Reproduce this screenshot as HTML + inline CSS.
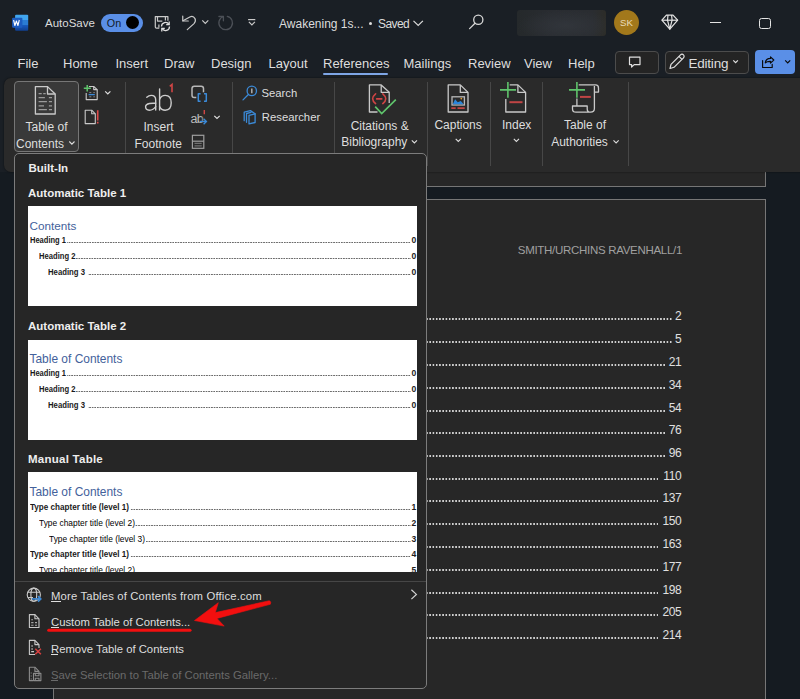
<!DOCTYPE html>
<html><head><meta charset="utf-8"><style>
html,body{margin:0;padding:0;}
body{width:800px;height:699px;overflow:hidden;position:relative;background:#151b21;font-family:"Liberation Sans", sans-serif;}
.t{position:absolute;white-space:pre;line-height:1;}
.b{position:absolute;}
svg.b{overflow:visible;}
</style></head><body>
<div class="b" style="left:53px;top:-10px;width:713px;height:197px;background:#272727;border:1px solid #767676;box-sizing:border-box;"></div>
<div class="b" style="left:53px;top:199px;width:713px;height:520px;background:#272727;border:1px solid #767676;box-sizing:border-box;"></div>
<div class="b" style="left:0px;top:0px;width:800px;height:78px;background:#1a1f25;"></div>
<div class="b" style="left:0px;top:78px;width:53px;height:94px;background:#1a1f25;"></div>
<div class="b" style="left:3.5px;top:78px;width:800px;height:94px;background:#2a2a2a;border-radius:7px 0 0 7px;box-shadow:0 0 2px rgba(0,0,0,0.6);"></div>
<div class="t" style="left:45.00px;top:18px;font-size:11.5px;color:#dcdcdc;">AutoSave</div>
<div class="b" style="left:101.3px;top:14px;width:41.5px;height:17.8px;background:#5a8fe7;border-radius:9px;"></div>
<div class="t" style="left:106.80px;top:18px;font-size:10.8px;color:#111a2a;">On</div>
<div class="b" style="left:126.1px;top:16.1px;width:13.4px;height:13.4px;background:#000;border-radius:50%;"></div>
<div class="t" style="left:279.00px;top:18px;font-size:12px;color:#dcdcdc;">Awakening 1s...</div>
<div class="b" style="left:369.3px;top:21.5px;width:3px;height:3px;background:#dcdcdc;border-radius:50%;"></div>
<div class="t" style="left:378.00px;top:18px;font-size:12px;color:#dcdcdc;letter-spacing:-0.6px;">Saved</div>
<div class="b" style="left:516.5px;top:9.5px;width:89.2px;height:26px;background:radial-gradient(ellipse at 55% 60%, rgba(50,54,60,0.9) 0%, rgba(40,44,48,0) 70%), linear-gradient(to right, #25292b 0%, #292c31 40%, #2a2d31 85%, #2c2c28 100%);border-radius:3px;"></div>
<div class="b" style="left:613.8px;top:10px;width:25px;height:25px;background:#a2781b;border-radius:50%;"></div>
<div class="t" style="left:426.50px;width:400px;text-align:center;top:18px;font-size:9.6px;color:#eadcbc;">SK</div>
<div class="b" style="left:710px;top:21.6px;width:10.5px;height:1.2px;background:#e4e4e4;"></div>
<div class="b" style="left:759px;top:17.5px;width:11.5px;height:11.5px;border:1.25px solid #e4e4e4;border-radius:2.5px;box-sizing:border-box;"></div>
<div class="t" style="left:17.50px;top:57px;font-size:13px;color:#dedede;">File</div>
<div class="t" style="left:63.00px;top:57px;font-size:13px;color:#dedede;">Home</div>
<div class="t" style="left:115.50px;top:57px;font-size:13px;color:#dedede;">Insert</div>
<div class="t" style="left:164.00px;top:57px;font-size:13px;color:#dedede;">Draw</div>
<div class="t" style="left:211.00px;top:57px;font-size:13px;color:#dedede;">Design</div>
<div class="t" style="left:268.50px;top:57px;font-size:13px;color:#dedede;">Layout</div>
<div class="t" style="left:323.00px;top:57px;font-size:13px;color:#dedede;">References</div>
<div class="t" style="left:403.50px;top:57px;font-size:13px;color:#dedede;">Mailings</div>
<div class="t" style="left:468.00px;top:57px;font-size:13px;color:#dedede;">Review</div>
<div class="t" style="left:524.00px;top:57px;font-size:13px;color:#dedede;">View</div>
<div class="t" style="left:568.00px;top:57px;font-size:13px;color:#dedede;">Help</div>
<div class="b" style="left:323px;top:72.5px;width:65px;height:2px;background:#7ea6e6;border-radius:1px;"></div>
<div class="b" style="left:615px;top:51px;width:44px;height:23px;border:1px solid #4c4c4c;border-radius:4px;box-sizing:border-box;background:#242424;"></div>
<div class="b" style="left:665px;top:51px;width:84px;height:23px;border:1px solid #4c4c4c;border-radius:4px;box-sizing:border-box;background:#242424;"></div>
<div class="t" style="left:688.40px;top:57px;font-size:13.5px;color:#dedede;letter-spacing:-0.2px;">Editing</div>
<div class="b" style="left:755.3px;top:50.3px;width:40px;height:23.4px;background:#5a8fe7;border-radius:4px;"></div>
<div class="b" style="left:14px;top:81px;width:65px;height:71px;background:#393939;border:1px solid #767676;border-radius:4px;box-sizing:border-box;"></div>
<div class="t" style="left:-153.50px;width:400px;text-align:center;top:121px;font-size:12px;color:#dedede;">Table of</div>
<div class="t" style="left:-160.00px;width:400px;text-align:center;top:138px;font-size:12px;color:#dedede;">Contents</div>
<div class="b" style="left:124.5px;top:82px;width:1px;height:71px;background:#474747;"></div>
<div class="t" style="left:-41.50px;width:400px;text-align:center;top:121px;font-size:12px;color:#dedede;">Insert</div>
<div class="t" style="left:-41.80px;width:400px;text-align:center;top:138px;font-size:12px;color:#dedede;">Footnote</div>
<div class="t" style="left:190.60px;top:113px;font-size:12.5px;color:#bdbdbd;letter-spacing:-0.9px;">ab</div>
<div class="b" style="left:199.5px;top:112px;width:8px;height:12px;background:linear-gradient(to right, rgba(42,42,42,0) 0, rgba(42,42,42,0.75) 70%);"></div>
<div class="b" style="left:231.5px;top:82px;width:1px;height:71px;background:#474747;"></div>
<div class="t" style="left:261.50px;top:88px;font-size:11.3px;color:#dedede;">Search</div>
<div class="t" style="left:261.80px;top:112px;font-size:11.3px;color:#dedede;">Researcher</div>
<div class="b" style="left:333.5px;top:82px;width:1px;height:71px;background:#474747;"></div>
<div class="t" style="left:179.70px;width:400px;text-align:center;top:120px;font-size:12px;color:#dedede;">Citations &amp;</div>
<div class="t" style="left:174.30px;width:400px;text-align:center;top:136px;font-size:12px;color:#dedede;">Bibliography</div>
<div class="b" style="left:427px;top:82px;width:1px;height:84px;background:#474747;"></div>
<div class="t" style="left:258.10px;width:400px;text-align:center;top:119px;font-size:12px;color:#dedede;">Captions</div>
<div class="b" style="left:490px;top:82px;width:1px;height:84px;background:#474747;"></div>
<div class="t" style="left:316.70px;width:400px;text-align:center;top:119px;font-size:12px;color:#dedede;">Index</div>
<div class="b" style="left:542px;top:82px;width:1px;height:84px;background:#474747;"></div>
<div class="t" style="left:385.00px;width:400px;text-align:center;top:119px;font-size:12px;color:#dedede;">Table of</div>
<div class="t" style="left:379.50px;width:400px;text-align:center;top:136px;font-size:12px;color:#dedede;">Authorities</div>
<div class="b" style="left:628px;top:82px;width:1px;height:84px;background:#474747;"></div>
<svg class="b" style="left:0;top:0" width="800" height="699" viewBox="0 0 800 699"><defs><linearGradient id="wg" x1="0" y1="0" x2="0" y2="1"><stop offset="0" stop-color="#41a5ee"/><stop offset="0.33" stop-color="#41a5ee"/><stop offset="0.33" stop-color="#2b7cd3"/><stop offset="0.66" stop-color="#2b7cd3"/><stop offset="0.66" stop-color="#185abd"/><stop offset="1" stop-color="#103f91"/></linearGradient></defs><rect x="15.1" y="14.7" width="13.1" height="16" rx="1" fill="url(#wg)"/><rect x="12.1" y="17.7" width="10.3" height="10" rx="1" fill="#1d5cc0"/><path d="M13.6 20l1.3 5.5 1.5-4.5 1.5 4.5 1.4-5.5" fill="none" stroke="#fff" stroke-width="1.1" stroke-linejoin="round"/><g fill="none" stroke="#c9c9c9" stroke-width="1.2" stroke-linejoin="round"><path d="M159.3 28.2H156.5Q155.3 28.2 155.3 27V16.6H167.9V20.8"/><path d="M157.5 16.6V21.1H162.3"/><path d="M165.4 16.6V20.6"/><path d="M158.9 24.6V27.6"/></g><g fill="none" stroke="#e0e0e0" stroke-width="1.25"><path d="M161.5 26.6A4 4 0 0 1 169 24.6"/><path d="M169.2 21.6V24.7H166.2"/><path d="M169.5 26.4A4 4 0 0 1 162 28.4"/><path d="M161.8 31.4V28.3H164.8"/></g><g fill="none" stroke="#c9c9c9" stroke-width="1.2" stroke-linecap="round" stroke-linejoin="round"><path d="M182.75 16.2V21H188.3"/><path d="M183 20.8L189.8 17Q193.2 15.3 195 18.6Q196.2 21.2 194 23.6L187.3 29.6"/></g><path d="M202.3 20.3l3 3 3-3" fill="none" stroke="#c9c9c9" stroke-width="1.2"/><g fill="none" stroke="#4c5057" stroke-width="1.3" stroke-linecap="round" stroke-linejoin="round"><path d="M227.3 16.3A6.8 6.8 0 1 1 223.4 16.5"/><path d="M218.9 16.5H223.4V20.8"/></g><g fill="none" stroke="#c9c9c9" stroke-width="1.2"><path d="M248.1 19.6H255.3"/><path d="M248.9 21.9l3 3 3-3"/></g><path d="M413.5 20.8l4.7 4.7 4.7-4.7" fill="none" stroke="#dcdcdc" stroke-width="1.2"/><g fill="none" stroke="#d8d8d8" stroke-width="1.3" stroke-linecap="round"><circle cx="478.3" cy="19.8" r="4.6"/><path d="M475 23.2L469.6 28.6"/></g><g fill="none" stroke="#e4e4e4" stroke-width="1.2" stroke-linejoin="round"><path d="M666.4 15.1H673L677.7 20.2L669.8 29.2L661.9 20.2Z"/><path d="M661.9 20.2H677.7"/><path d="M668 15.1L667.5 20.2L669.8 29.2L672.1 20.2L671.6 15.1"/></g><path d="M629.5 57.2H640V64.6H634.2L631.6 67V64.6H629.5Z" fill="none" stroke="#e0e0e0" stroke-width="1.2" stroke-linejoin="round"/><g fill="none" stroke="#e0e0e0" stroke-width="1.2" stroke-linejoin="round"><path d="M670 68.5L671 64.3L680.5 54.8A2.1 2.1 0 0 1 683.5 57.8L674 67.3Z"/><path d="M679 56.3L682 59.3"/></g><path d="M733.3 60.3l2.3 2.3 2.3-2.3" fill="none" stroke="#e0e0e0" stroke-width="1.2"/><g fill="none" stroke="#0a0a0a" stroke-width="1.15" stroke-linejoin="round" stroke-linecap="round"><path d="M762.6 60.6V67.5H772.2V64.3"/><path d="M765.3 62.9C765.6 60 767.5 58.4 770.5 58.4V56.8L773.8 60L770.5 63.1V61.4C768 61.3 766.5 61.8 765.3 62.9Z"/></g><path d="M785.2 60.3l2.5 2.5 2.5-2.5" fill="none" stroke="#0a0a0a" stroke-width="1.2"/><g fill="none" stroke="#c9c9c9" stroke-width="1.3" stroke-linejoin="round"><path d="M35.4 86.6H47.5L55.2 94V114H35.4Z"/><path d="M47.5 86.6V94H55.2"/></g><g stroke="#9a9a9a" stroke-width="1.3"><path d="M38.6 93.7H41.7M43.2 93.7H45.7"/><path d="M38.6 97.7H44.9M48.9 97.7H52"/><path d="M38.6 101.6H46.9M48.9 101.6H52"/><path d="M38.6 105.8H44M48.9 105.8H52"/><path d="M38.6 109.6H46.9M48.9 109.6H52"/></g><path d="M69.3 141.5l2.6 2.6 2.6-2.6" fill="none" stroke="#dedede" stroke-width="1.1"/><g fill="none" stroke="#c9c9c9" stroke-width="1.1" stroke-linejoin="round"><path d="M88.9 86.5H93.7L97.2 89.6V99.6H86.2V93"/><path d="M93.7 86.5V89.6H97.2"/></g><path d="M89.3 92.6H91.3M93.4 92.6H94.8M89.3 96.8H91.3M93.4 96.8H94.8" stroke="#8a8a8a" stroke-width="1"/><path d="M88.6 94.6H94.8" stroke="#3b8ad8" stroke-width="1.3"/><path d="M87.2 84.9V91.6M83.8 88.2H90.9" stroke="#5fc46c" stroke-width="1.5"/><path d="M105.2 91.4l2.6 2.6 2.6-2.6" fill="none" stroke="#dedede" stroke-width="1.2"/><g fill="none" stroke="#c9c9c9" stroke-width="1.1" stroke-linejoin="round"><path d="M85.2 110.2H91.7L95.3 113.8V123.6H85.2Z"/><path d="M91.7 110.2V113.8H95.3"/></g><path d="M97.7 110.2V120.5M97.7 121.8V123.6" stroke="#e04a4a" stroke-width="1.6"/><g fill="none" stroke="#cdcdcd" stroke-width="1.4" stroke-linecap="round"><path d="M146.8 97.3Q148.8 95.4 151.2 95.4Q155.7 95.4 155.7 100V110"/><path d="M155.7 103.3Q152 103 149.5 103.5Q145.6 104.2 145.6 106.8Q145.6 110.2 149.3 110.2Q153.4 110.2 155.7 106.5"/><path d="M159.6 89V110"/><path d="M159.6 99.2Q161.4 95.4 165.2 95.4Q171.2 95.4 171.2 102.8Q171.2 110.2 165.2 110.2Q161.4 110.2 159.6 106.6"/></g><path d="M169.8 86.3L172 84.4V92.3" fill="none" stroke="#d04545" stroke-width="1.6"/><rect x="192" y="86.3" width="11.5" height="11.2" rx="2.3" fill="none" stroke="#b8b8b8" stroke-width="1.5"/><rect x="196.3" y="92.3" width="11.5" height="10.5" fill="#2a2a2a"/><g fill="none" stroke="#3b8ad8" stroke-width="1.5" stroke-linejoin="round"><path d="M200.6 93.8H198.3V101.2H200.6"/><path d="M204 93.8H206.3V101.2H204"/></g><path d="M204.3 110V114.2" stroke="#d04545" stroke-width="1.4"/><g fill="none" stroke="#3b8ad8" stroke-width="1.4"><path d="M199.8 121.5H206.3"/><path d="M203.6 118.8L206.4 121.5L203.6 124.2"/></g><path d="M214.3 115.8l2.7 2.7 2.7-2.7" fill="none" stroke="#dedede" stroke-width="1.2"/><g fill="none" stroke="#9e9e9e" stroke-width="1.2"><rect x="192.4" y="135.3" width="11.4" height="13"/><path d="M192.4 141.2H203.8"/><path d="M194.5 143.4H201.7M194.5 145.8H201.7" stroke="#707070"/></g><g fill="none" stroke="#3b8ad8" stroke-width="1.3" stroke-linecap="round"><circle cx="251.8" cy="90.9" r="4.7"/><path d="M248.4 94.5L243 99.9"/></g><path d="M251.8 88.6V93.3" stroke="#a8a8a8" stroke-width="1.6"/><g fill="none" stroke="#3b8ad8" stroke-width="1.3" stroke-linejoin="round" stroke-linecap="round"><path d="M249 123.8V115.3L255.1 113.8V122.5Z"/><path d="M246.5 122.3V113.5L251 112.3"/><path d="M244.2 120.7V112.2L250.4 110.6L255.1 113.8"/></g><g fill="none" stroke="#c9c9c9" stroke-width="1.3" stroke-linejoin="round"><path d="M377.5 112H369.4V84.9H381.2L389.2 92.3V102.9"/><path d="M381.2 84.9V92.3H389.2"/></g><g fill="none" stroke="#d04545" stroke-width="1.6" stroke-linecap="round"><path d="M375.6 93.8Q369.7 98.7 375.6 103.6"/><path d="M382.8 93.8Q388.7 98.7 382.8 103.6"/><path d="M376.6 98.9H381.8"/></g><path d="M375.2 106.6L381.7 113.5L395.8 99.7" fill="none" stroke="#5fc46c" stroke-width="1.7"/><path d="M411.8 140.3l2.6 2.6 2.6-2.6" fill="none" stroke="#dedede" stroke-width="1.1"/><g fill="none" stroke="#c9c9c9" stroke-width="1.3" stroke-linejoin="round"><path d="M448.2 84.9H460.3L468 92.4V112H448.2Z"/><path d="M460.3 84.9V92.4H468"/></g><rect x="452" y="96.8" width="12.4" height="8.2" fill="none" stroke="#b8b8b8" stroke-width="1.3"/><path d="M452.8 104.3L455.1 99.3L457.7 102.3L460.8 100.9L463.6 104.3Z" fill="#2b86dc"/><circle cx="461.3" cy="98.6" r="0.9" fill="#e09a30"/><path d="M451.3 108.1H455.7M457.5 108.1H464.7" stroke="#c04545" stroke-width="1.8"/><path d="M455.7 138.8l2.6 2.6 2.6-2.6" fill="none" stroke="#dedede" stroke-width="1.1"/><g fill="none" stroke="#c9c9c9" stroke-width="1.3" stroke-linejoin="round"><path d="M509.7 84.9H517.9L525.6 92.4V112H505.8V99.1"/><path d="M517.9 84.9V92.4H525.6"/></g><path d="M507.9 82V97.8M500 89.9H516" stroke="#5fc46c" stroke-width="1.6"/><path d="M509.4 102.2H522.5" stroke="#c04545" stroke-width="2"/><path d="M513.8 138.8l2.6 2.6 2.6-2.6" fill="none" stroke="#dedede" stroke-width="1.1"/><g fill="none" stroke="#c9c9c9" stroke-width="1.3" stroke-linejoin="round"><path d="M578.7 84.9H595.5Q598.5 84.9 598.5 88V92.1H594.4"/><path d="M594.4 86V108.5Q594.4 112.2 590.5 112.2H576Q572.5 112.2 572.5 109V106H587.2V109Q587.2 112.2 590.5 112.2"/><path d="M576.9 98.5V106"/></g><path d="M576.9 82V97.8M569 89.9H585" stroke="#5fc46c" stroke-width="1.6"/><path d="M580 96.9H590.8" stroke="#c04545" stroke-width="2"/><path d="M613.5 140.3l2.6 2.6 2.6-2.6" fill="none" stroke="#dedede" stroke-width="1.1"/></svg>
<div class="t" style="right:118.00px;top:245px;font-size:11.5px;color:#a0a0a0;letter-spacing:-0.3px;">SMITH/URCHINS RAVENHALL/1</div>
<div class="t" style="right:118.60px;top:310px;font-size:12px;color:#e0e0e0;letter-spacing:-0.35px;">2</div>
<div class="b" style="left:427px;top:318px;width:244.5px;height:2px;background-image:linear-gradient(to right,transparent 0,transparent 1.55px,#cfcfcf 1.55px);background-size:3.25px 2px;background-position:right 0 top 0;"></div>
<div class="t" style="right:118.60px;top:333px;font-size:12px;color:#e0e0e0;letter-spacing:-0.35px;">5</div>
<div class="b" style="left:427px;top:341px;width:244.5px;height:2px;background-image:linear-gradient(to right,transparent 0,transparent 1.55px,#cfcfcf 1.55px);background-size:3.25px 2px;background-position:right 0 top 0;"></div>
<div class="t" style="right:118.60px;top:356px;font-size:12px;color:#e0e0e0;letter-spacing:-0.35px;">21</div>
<div class="b" style="left:427px;top:364px;width:238.0px;height:2px;background-image:linear-gradient(to right,transparent 0,transparent 1.55px,#cfcfcf 1.55px);background-size:3.25px 2px;background-position:right 0 top 0;"></div>
<div class="t" style="right:118.60px;top:379px;font-size:12px;color:#e0e0e0;letter-spacing:-0.35px;">34</div>
<div class="b" style="left:427px;top:387px;width:238.0px;height:2px;background-image:linear-gradient(to right,transparent 0,transparent 1.55px,#cfcfcf 1.55px);background-size:3.25px 2px;background-position:right 0 top 0;"></div>
<div class="t" style="right:118.60px;top:402px;font-size:12px;color:#e0e0e0;letter-spacing:-0.35px;">54</div>
<div class="b" style="left:427px;top:410px;width:238.0px;height:2px;background-image:linear-gradient(to right,transparent 0,transparent 1.55px,#cfcfcf 1.55px);background-size:3.25px 2px;background-position:right 0 top 0;"></div>
<div class="t" style="right:118.60px;top:424px;font-size:12px;color:#e0e0e0;letter-spacing:-0.35px;">76</div>
<div class="b" style="left:427px;top:432px;width:238.0px;height:2px;background-image:linear-gradient(to right,transparent 0,transparent 1.55px,#cfcfcf 1.55px);background-size:3.25px 2px;background-position:right 0 top 0;"></div>
<div class="t" style="right:118.60px;top:447px;font-size:12px;color:#e0e0e0;letter-spacing:-0.35px;">96</div>
<div class="b" style="left:427px;top:455px;width:238.0px;height:2px;background-image:linear-gradient(to right,transparent 0,transparent 1.55px,#cfcfcf 1.55px);background-size:3.25px 2px;background-position:right 0 top 0;"></div>
<div class="t" style="right:118.60px;top:470px;font-size:12px;color:#e0e0e0;letter-spacing:-0.35px;">110</div>
<div class="b" style="left:427px;top:478px;width:231.39999999999998px;height:2px;background-image:linear-gradient(to right,transparent 0,transparent 1.55px,#cfcfcf 1.55px);background-size:3.25px 2px;background-position:right 0 top 0;"></div>
<div class="t" style="right:118.60px;top:492px;font-size:12px;color:#e0e0e0;letter-spacing:-0.35px;">137</div>
<div class="b" style="left:427px;top:500px;width:231.39999999999998px;height:2px;background-image:linear-gradient(to right,transparent 0,transparent 1.55px,#cfcfcf 1.55px);background-size:3.25px 2px;background-position:right 0 top 0;"></div>
<div class="t" style="right:118.60px;top:515px;font-size:12px;color:#e0e0e0;letter-spacing:-0.35px;">150</div>
<div class="b" style="left:427px;top:523px;width:231.39999999999998px;height:2px;background-image:linear-gradient(to right,transparent 0,transparent 1.55px,#cfcfcf 1.55px);background-size:3.25px 2px;background-position:right 0 top 0;"></div>
<div class="t" style="right:118.60px;top:538px;font-size:12px;color:#e0e0e0;letter-spacing:-0.35px;">163</div>
<div class="b" style="left:427px;top:546px;width:231.39999999999998px;height:2px;background-image:linear-gradient(to right,transparent 0,transparent 1.55px,#cfcfcf 1.55px);background-size:3.25px 2px;background-position:right 0 top 0;"></div>
<div class="t" style="right:118.60px;top:561px;font-size:12px;color:#e0e0e0;letter-spacing:-0.35px;">177</div>
<div class="b" style="left:427px;top:569px;width:231.39999999999998px;height:2px;background-image:linear-gradient(to right,transparent 0,transparent 1.55px,#cfcfcf 1.55px);background-size:3.25px 2px;background-position:right 0 top 0;"></div>
<div class="t" style="right:118.60px;top:584px;font-size:12px;color:#e0e0e0;letter-spacing:-0.35px;">198</div>
<div class="b" style="left:427px;top:592px;width:231.39999999999998px;height:2px;background-image:linear-gradient(to right,transparent 0,transparent 1.55px,#cfcfcf 1.55px);background-size:3.25px 2px;background-position:right 0 top 0;"></div>
<div class="t" style="right:118.60px;top:606px;font-size:12px;color:#e0e0e0;letter-spacing:-0.35px;">205</div>
<div class="b" style="left:427px;top:614px;width:231.39999999999998px;height:2px;background-image:linear-gradient(to right,transparent 0,transparent 1.55px,#cfcfcf 1.55px);background-size:3.25px 2px;background-position:right 0 top 0;"></div>
<div class="t" style="right:118.60px;top:629px;font-size:12px;color:#e0e0e0;letter-spacing:-0.35px;">214</div>
<div class="b" style="left:427px;top:637px;width:231.39999999999998px;height:2px;background-image:linear-gradient(to right,transparent 0,transparent 1.55px,#cfcfcf 1.55px);background-size:3.25px 2px;background-position:right 0 top 0;"></div>
<div class="b" style="left:14px;top:153px;width:413px;height:536px;background:#262626;border:1px solid #7c7c7c;border-radius:5px;box-sizing:border-box;"></div>
<div class="t" style="left:28.50px;top:163px;font-size:11.5px;color:#eeeeee;font-weight:700;">Built-In</div>
<div class="t" style="left:28.00px;top:188px;font-size:11.5px;color:#eeeeee;font-weight:700;">Automatic Table 1</div>
<div class="b" style="left:28px;top:206px;width:389px;height:100px;background:#fff;overflow:hidden;"><div class="t" style="left:1.50px;top:14.00px;font-size:11.7px;color:#43619b;font-weight:400;">Contents</div><div class="t" style="left:2.00px;top:30.00px;font-size:8.6px;color:#1a1a1a;font-weight:700;transform:scaleX(0.876);transform-origin:0 0;">Heading 1</div><div class="t" style="right:0.70px;top:30.00px;font-size:8.6px;color:#1e1e1e;font-weight:700;">0</div><div class="b" style="left:38.8px;top:35.5px;width:344.0px;height:1.5px;background-image:linear-gradient(to right,#6a6a6a 0,#6a6a6a 1.3px,transparent 1.3px);background-size:2.6px 1.5px;background-position:right 0 top 0;"></div><div class="t" style="left:11.00px;top:46.00px;font-size:8.6px;color:#1a1a1a;font-weight:700;transform:scaleX(0.888);transform-origin:0 0;">Heading 2</div><div class="t" style="right:0.70px;top:46.00px;font-size:8.6px;color:#1e1e1e;font-weight:700;">0</div><div class="b" style="left:48.3px;top:51.5px;width:334.5px;height:1.5px;background-image:linear-gradient(to right,#6a6a6a 0,#6a6a6a 1.3px,transparent 1.3px);background-size:2.6px 1.5px;background-position:right 0 top 0;"></div><div class="t" style="left:20.00px;top:62.00px;font-size:8.6px;color:#1a1a1a;font-weight:700;transform:scaleX(0.9);transform-origin:0 0;">Heading 3</div><div class="t" style="right:0.70px;top:62.00px;font-size:8.6px;color:#1e1e1e;font-weight:700;">0</div><div class="b" style="left:60.0px;top:67.5px;width:322.8px;height:1.5px;background-image:linear-gradient(to right,#6a6a6a 0,#6a6a6a 1.3px,transparent 1.3px);background-size:2.6px 1.5px;background-position:right 0 top 0;"></div></div>
<div class="t" style="left:28.00px;top:321px;font-size:11.5px;color:#eeeeee;font-weight:700;">Automatic Table 2</div>
<div class="b" style="left:28px;top:339.5px;width:389px;height:100px;background:#fff;overflow:hidden;"><div class="t" style="left:1.50px;top:14.50px;font-size:11.95px;color:#43619b;font-weight:400;">Table of Contents</div><div class="t" style="left:2.00px;top:29.50px;font-size:8.6px;color:#1a1a1a;font-weight:700;transform:scaleX(0.876);transform-origin:0 0;">Heading 1</div><div class="t" style="right:0.70px;top:29.50px;font-size:8.6px;color:#1e1e1e;font-weight:700;">0</div><div class="b" style="left:38.8px;top:35.0px;width:344.0px;height:1.5px;background-image:linear-gradient(to right,#6a6a6a 0,#6a6a6a 1.3px,transparent 1.3px);background-size:2.6px 1.5px;background-position:right 0 top 0;"></div><div class="t" style="left:11.00px;top:45.50px;font-size:8.6px;color:#1a1a1a;font-weight:700;transform:scaleX(0.888);transform-origin:0 0;">Heading 2</div><div class="t" style="right:0.70px;top:45.50px;font-size:8.6px;color:#1e1e1e;font-weight:700;">0</div><div class="b" style="left:48.3px;top:51.0px;width:334.5px;height:1.5px;background-image:linear-gradient(to right,#6a6a6a 0,#6a6a6a 1.3px,transparent 1.3px);background-size:2.6px 1.5px;background-position:right 0 top 0;"></div><div class="t" style="left:20.00px;top:61.50px;font-size:8.6px;color:#1a1a1a;font-weight:700;transform:scaleX(0.9);transform-origin:0 0;">Heading 3</div><div class="t" style="right:0.70px;top:61.50px;font-size:8.6px;color:#1e1e1e;font-weight:700;">0</div><div class="b" style="left:60.0px;top:67.0px;width:322.8px;height:1.5px;background-image:linear-gradient(to right,#6a6a6a 0,#6a6a6a 1.3px,transparent 1.3px);background-size:2.6px 1.5px;background-position:right 0 top 0;"></div></div>
<div class="t" style="left:28.00px;top:454px;font-size:11.5px;color:#eeeeee;font-weight:700;letter-spacing:0.25px;">Manual Table</div>
<div class="b" style="left:28px;top:472px;width:389px;height:100px;background:#fff;overflow:hidden;"><div class="t" style="left:1.50px;top:15.00px;font-size:11.95px;color:#43619b;font-weight:400;">Table of Contents</div><div class="t" style="left:2.00px;top:31.00px;font-size:8.6px;color:#1a1a1a;font-weight:700;transform:scaleX(0.943);transform-origin:0 0;">Type chapter title (level 1)</div><div class="t" style="right:0.70px;top:31.00px;font-size:8.6px;color:#1e1e1e;font-weight:700;">1</div><div class="b" style="left:101.8px;top:36.5px;width:281.0px;height:1.5px;background-image:linear-gradient(to right,#6a6a6a 0,#6a6a6a 1.3px,transparent 1.3px);background-size:2.6px 1.5px;background-position:right 0 top 0;"></div><div class="t" style="left:10.50px;top:47.00px;font-size:8.6px;color:#000;font-weight:400;transform:scaleX(0.975);transform-origin:0 0;">Type chapter title (level 2)</div><div class="t" style="right:0.70px;top:47.00px;font-size:8.6px;color:#1e1e1e;font-weight:700;">2</div><div class="b" style="left:107.3px;top:52.5px;width:275.5px;height:1.5px;background-image:linear-gradient(to right,#6a6a6a 0,#6a6a6a 1.3px,transparent 1.3px);background-size:2.6px 1.5px;background-position:right 0 top 0;"></div><div class="t" style="left:20.50px;top:63.00px;font-size:8.6px;color:#000;font-weight:400;transform:scaleX(0.975);transform-origin:0 0;">Type chapter title (level 3)</div><div class="t" style="right:0.70px;top:63.00px;font-size:8.6px;color:#1e1e1e;font-weight:700;">3</div><div class="b" style="left:117.3px;top:68.5px;width:265.5px;height:1.5px;background-image:linear-gradient(to right,#6a6a6a 0,#6a6a6a 1.3px,transparent 1.3px);background-size:2.6px 1.5px;background-position:right 0 top 0;"></div><div class="t" style="left:2.00px;top:78.00px;font-size:8.6px;color:#1a1a1a;font-weight:700;transform:scaleX(0.943);transform-origin:0 0;">Type chapter title (level 1)</div><div class="t" style="right:0.70px;top:78.00px;font-size:8.6px;color:#1e1e1e;font-weight:700;">4</div><div class="b" style="left:101.8px;top:83.5px;width:281.0px;height:1.5px;background-image:linear-gradient(to right,#6a6a6a 0,#6a6a6a 1.3px,transparent 1.3px);background-size:2.6px 1.5px;background-position:right 0 top 0;"></div><div class="t" style="left:10.50px;top:94.00px;font-size:8.6px;color:#000;font-weight:400;transform:scaleX(0.975);transform-origin:0 0;">Type chapter title (level 2)</div><div class="t" style="right:0.70px;top:94.00px;font-size:8.6px;color:#1e1e1e;font-weight:700;">5</div><div class="b" style="left:107.3px;top:99.5px;width:275.5px;height:1.5px;background-image:linear-gradient(to right,#6a6a6a 0,#6a6a6a 1.3px,transparent 1.3px);background-size:2.6px 1.5px;background-position:right 0 top 0;"></div></div>
<div class="b" style="left:15px;top:581px;width:411px;height:1px;background:#464646;"></div>
<div class="t" style="left:51.00px;top:591px;font-size:11.3px;color:#dedede;letter-spacing:0.15px;">More Tables of Contents from Office.com</div>
<div class="b" style="left:51px;top:601px;width:10px;height:1px;background:#dedede;"></div>
<div class="t" style="left:51.00px;top:617px;font-size:11.3px;color:#dedede;">Custom Table of Contents...</div>
<div class="b" style="left:51px;top:627px;width:7.5px;height:1px;background:#dedede;"></div>
<div class="t" style="left:51.00px;top:644px;font-size:11.3px;color:#dedede;">Remove Table of Contents</div>
<div class="b" style="left:51px;top:654px;width:7px;height:1px;background:#dedede;"></div>
<div class="t" style="left:51.00px;top:670px;font-size:11.3px;color:#6a6a6a;">Save Selection to Table of Contents Gallery...</div>
<div class="b" style="left:51px;top:680px;width:6.5px;height:1px;background:#6a6a6a;"></div>
<svg class="b" style="left:0;top:0" width="800" height="699" viewBox="0 0 800 699"><g fill="none" stroke="#c9c9c9" stroke-width="1.1"><circle cx="33.8" cy="594.7" r="6.6"/><ellipse cx="33.8" cy="594.7" rx="2.9" ry="6.6"/><path d="M27.5 592.2H40.1M27.8 597.5H33"/></g><g fill="none" stroke="#3b8ad8" stroke-width="1.6"><path d="M32 598.9H40.6"/><path d="M38 596.2L40.8 598.9L38 601.6"/></g><path d="M411.4 589.7L416.4 594.4L411.4 599.1" fill="none" stroke="#d4d4d4" stroke-width="1.2"/><g fill="none" stroke="#c9c9c9" stroke-width="1.1" stroke-linejoin="round"><path d="M29.4 614.6H34.9L39 618.8V627.5H29.4Z"/><path d="M34.9 614.6V618.8H39"/><path d="M31.2 619.8H33M31.2 622.6H33.5M35 622.6H37M31.2 625.2H33.5M35 625.2H37" stroke="#a8a8a8"/></g><g fill="none" stroke="#c9c9c9" stroke-width="1.1" stroke-linejoin="round"><path d="M35 654.5H29.4V640.4H34.9L39 644.6V648"/><path d="M34.9 640.4V644.6H39"/><path d="M31.2 646H33M31.2 649H33M31.2 651.6H34"/></g><path d="M35.3 648.7L40.9 654.2M40.9 648.7L35.3 654.2" stroke="#d84040" stroke-width="1.5"/><g fill="none" stroke="#8a8a8a" stroke-width="1.1" stroke-linejoin="round"><path d="M33 680.6H29.4V667.2H34.9L39 671.4V673"/><path d="M34.9 667.2V671.4H39"/><path d="M31.2 672.6V673.6M31.2 675.6V676.6M31.2 678.6V679.6"/><path d="M33.5 673.4H40.9V680.6H33.5Z"/><path d="M35.3 673.4V675.8H39V673.4M35.3 680.6V678.2H39V680.6"/></g><path d="M48.7 630.3H190" stroke="#f20f0f" stroke-width="3" stroke-linecap="round"/><path d="M194.5 620.5L218.3 602.7L215.3 612.6L269.4 600.7Q271.6 601.9 270.3 604.3L217 618.4L224.2 626.1Z" fill="#f20f0f" stroke="#f20f0f" stroke-width="0.6" stroke-linejoin="round"/></svg>
</body></html>
